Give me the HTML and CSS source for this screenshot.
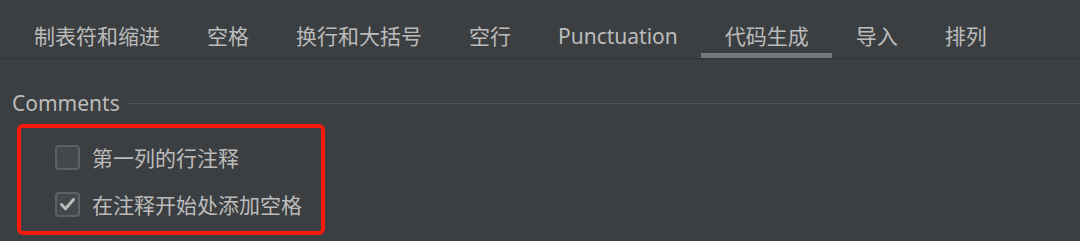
FILE: index.html
```html
<!DOCTYPE html>
<html lang="zh">
<head>
<meta charset="utf-8">
<link rel="stylesheet" href="styles.css">
</head>
<body>
<div class="tabs">
  <div class="tab">制表符和缩进</div>
  <div class="tab">空格</div>
  <div class="tab">换行和大括号</div>
  <div class="tab">空行</div>
  <div class="tab">Punctuation</div>
  <div class="tab active">代码生成</div>
  <div class="tab">导入</div>
  <div class="tab">排列</div>
</div>
<div class="section">
  <div class="title"><span class="title-text">Comments</span><span class="rule"></span></div>
  <div class="highlight">
    <label class="row"><span class="box"></span><span class="label">第一列的行注释</span></label>
    <label class="row"><span class="box checked"><svg viewBox="0 0 21 21" width="21" height="21"><path d="M4.5 10.5 L8.5 14.8 L16.5 5.5" fill="none" stroke="#bbbbbb" stroke-width="3" stroke-linecap="round" stroke-linejoin="round"/></svg></span><span class="label">在注释开始处添加空格</span></label>
  </div>
</div>
</body>
</html>
```
FILE: styles.css
```css
html, body {
  margin: 0;
  padding: 0;
  background: #3c3f41;
  height: 241px;
  overflow: hidden;
}
body {
  font-family: "Noto Sans", "Noto Sans CJK SC", sans-serif;
  color: #bbbbbb;
}
.tabs {
  display: flex;
  height: 58px;
  padding-left: 10.5px;
  border-bottom: 1px solid #313335;
  box-sizing: content-box;
}
.tab {
  box-sizing: border-box;
  height: 58px;
  padding: 20px 23.5px 0;
  font-size: 21px;
  line-height: 32px;
  white-space: nowrap;
}
.tab.active {
  border-bottom: 5px solid #75797e;
}
.section {
  padding: 30px 0 0 12px;
}
.title {
  display: flex;
  align-items: center;
  height: 28px;
}
.title-text {
  font-size: 21px;
  line-height: 28px;
}
.rule {
  flex: 1;
  height: 1px;
  background: #505354;
  margin-left: 8px;
  margin-top: 1px;
}
.highlight {
  box-sizing: border-box;
  margin: 7px 0 0 5px;
  width: 308px;
  height: 111px;
  border: 4px solid #f51b0d;
  border-radius: 6px;
  padding: 17px 0 0 34px;
  display: flex;
  flex-direction: column;
  gap: 22px;
}
.row {
  display: flex;
  align-items: center;
  height: 25px;
}
.box {
  box-sizing: border-box;
  width: 25px;
  height: 25px;
  border: 2px solid #5e6163;
  border-radius: 4px;
  background: #43494a;
  display: flex;
  align-items: center;
  justify-content: center;
}
.box svg {
  display: block;
}
.label {
  margin-left: 12px;
  font-size: 21px;
  line-height: 28px;
  white-space: nowrap;
}
```
